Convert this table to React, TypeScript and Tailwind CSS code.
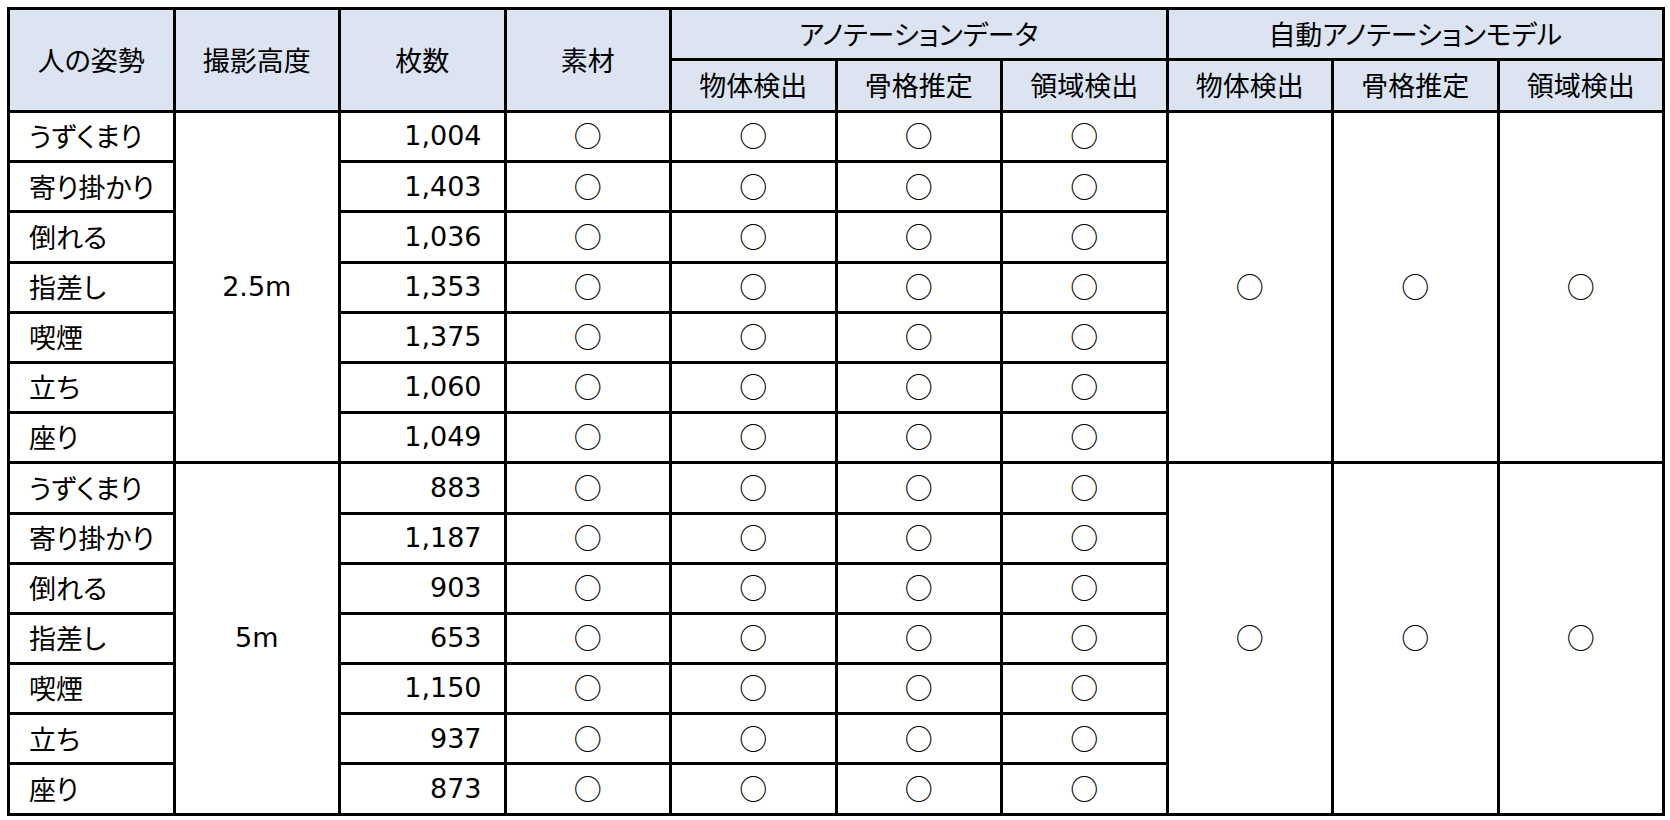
const rows = [
  { pose: 'うずくまり', a: '1,004', b: '883' },
  { pose: '寄り掛かり', a: '1,403', b: '1,187' },
  { pose: '倒れる', a: '1,036', b: '903' },
  { pose: '指差し', a: '1,353', b: '653' },
  { pose: '喫煙', a: '1,375', b: '1,150' },
  { pose: '立ち', a: '1,060', b: '937' },
  { pose: '座り', a: '1,049', b: '873' },
];

const groups = [
  { height: '2.5m', key: 'a' as const },
  { height: '5m', key: 'b' as const },
];

const subCols = ['物体検出', '骨格推定', '領域検出'];

const cell = 'border-[3px] border-black p-0';
const head = `${cell} bg-[#dbe4f0] text-center font-normal`;
const jp = "[font-family:'Noto_Sans_CJK_JP',sans-serif] [font-feature-settings:'palt']";
const num = "[font-family:'DejaVu_Sans',sans-serif]";

const Maru = () => <span className={`${jp} text-[28px] leading-none`}>○</span>;

export default function App() {
  return (
    <div className="min-h-[820px] w-[1670px] bg-white pl-[7px] pt-[7px] text-black">
      <table className={`w-[1658px] table-fixed border-collapse text-[27px] ${jp}`}>
        <thead>
          <tr className="h-[51px]">
            <th rowSpan={2} className={head}>人の姿勢</th>
            <th rowSpan={2} className={head}>撮影高度</th>
            <th rowSpan={2} className={head}>枚数</th>
            <th rowSpan={2} className={head}>素材</th>
            <th colSpan={3} className={head}>アノテーションデータ</th>
            <th colSpan={3} className={head}>自動アノテーションモデル</th>
          </tr>
          <tr className="h-[52px]">
            {[...subCols, ...subCols].map((c, i) => (
              <th key={i} className={head}>{c}</th>
            ))}
          </tr>
        </thead>
        <tbody>
          {groups.map((g) =>
            rows.map((r, i) => (
              <tr key={g.key + i} className="h-[50.2px]">
                <td className={`${cell} pl-[19px] text-left`}>{r.pose}</td>
                {i === 0 && (
                  <td rowSpan={7} className={`${cell} text-center ${num}`}>{g.height}</td>
                )}
                <td className={`${cell} pr-[22px] text-right ${num}`}>{r[g.key]}</td>
                <td className={`${cell} text-center`}><Maru /></td>
                <td className={`${cell} text-center`}><Maru /></td>
                <td className={`${cell} text-center`}><Maru /></td>
                <td className={`${cell} text-center`}><Maru /></td>
                {i === 0 && (
                  <>
                    <td rowSpan={7} className={`${cell} text-center`}><Maru /></td>
                    <td rowSpan={7} className={`${cell} text-center`}><Maru /></td>
                    <td rowSpan={7} className={`${cell} text-center`}><Maru /></td>
                  </>
                )}
              </tr>
            ))
          )}
        </tbody>
      </table>
    </div>
  );
}
